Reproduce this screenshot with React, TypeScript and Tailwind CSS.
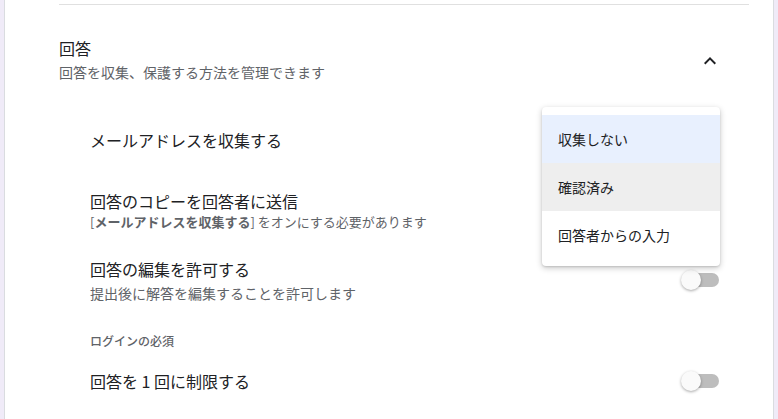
import React from 'react';

// ── Forms settings — Responses section ───────────────────────────────────────

const Toggle: React.FC = () => (
  <div className="relative h-5 w-[38px] shrink-0">
    <span className="absolute right-0 top-[3px] h-[14px] w-[34px] rounded-full bg-[#bdbdbd]" />
    <span className="absolute left-0 top-0 h-5 w-5 rounded-full bg-[#fafafa] shadow-[0_1px_3px_rgba(0,0,0,0.35)]" />
  </div>
);

const ChevronUp: React.FC = () => (
  <svg width="24" height="24" viewBox="0 0 24 24" className="shrink-0">
    <path d="M12 8l-6 6 1.41 1.41L12 10.83l4.59 4.58L18 14z" fill="#202124" />
  </svg>
);

const options = [
  { label: '収集しない', bg: 'bg-[#e8f0fe]' },
  { label: '確認済み', bg: 'bg-[#eeeeee]' },
  { label: '回答者からの入力', bg: 'bg-white' },
];

export default function App() {
  return (
    <div
      className="relative h-[419px] w-[778px] overflow-hidden bg-[#f0ebf8] px-1"
      style={{ fontFamily: '"Noto Sans CJK JP", "Noto Sans", Roboto, sans-serif' }}
    >
      <div className="h-full w-[770px] border-x border-[#dadce0] bg-white pl-[54px] pr-6">
        <div className="h-1" />
        <div className="h-px bg-[#e0e0e0]" />

        {/* Section header */}
        <div className="flex items-center justify-between pr-[27px] pt-[31px]">
          <div>
            <div className="text-base leading-6 text-[#202124]">回答</div>
            <div className="mt-[2px] text-sm leading-5 text-[#5f6368]">
              回答を収集、保護する方法を管理できます
            </div>
          </div>
          <div className="mt-1">
            <ChevronUp />
          </div>
        </div>

        {/* Settings */}
        <div className="pl-[31px] pr-[30px]">
          <div className="mt-[46px] text-base leading-6 text-[#202124]">メールアドレスを収集する</div>

          <div className="mt-[37px]">
            <div className="text-base leading-6 text-[#202124]">回答のコピーを回答者に送信</div>
            <div className="text-[13px] leading-[18px] text-[#5f6368]">
              [<span className="font-bold">メールアドレスを収集する</span>] をオンにする必要があります
            </div>
          </div>

          <div className="mt-[26px] flex items-center justify-between">
            <div>
              <div className="text-base leading-6 text-[#202124]">回答の編集を許可する</div>
              <div className="mt-[2px] text-sm leading-5 text-[#5f6368]">
                提出後に解答を編集することを許可します
              </div>
            </div>
            <Toggle />
          </div>

          <div className="mt-[30px] text-xs font-medium leading-4 text-[#5f6368]">ログインの必須</div>

          <div className="mt-5 flex items-center justify-between">
            <div className="text-base leading-6 text-[#202124]">回答を 1 回に制限する</div>
            <Toggle />
          </div>
        </div>
      </div>

      {/* Dropdown menu */}
      <div className="absolute left-[542px] top-[107px] w-[178px] rounded bg-white pb-[7px] pt-2 shadow-[0_2px_6px_rgba(0,0,0,0.22),0_1px_2px_rgba(0,0,0,0.12)]">
        {options.map((o) => (
          <div key={o.label} className={`flex h-12 items-center px-4 text-sm text-[#202124] ${o.bg}`}>
            {o.label}
          </div>
        ))}
      </div>
    </div>
  );
}
